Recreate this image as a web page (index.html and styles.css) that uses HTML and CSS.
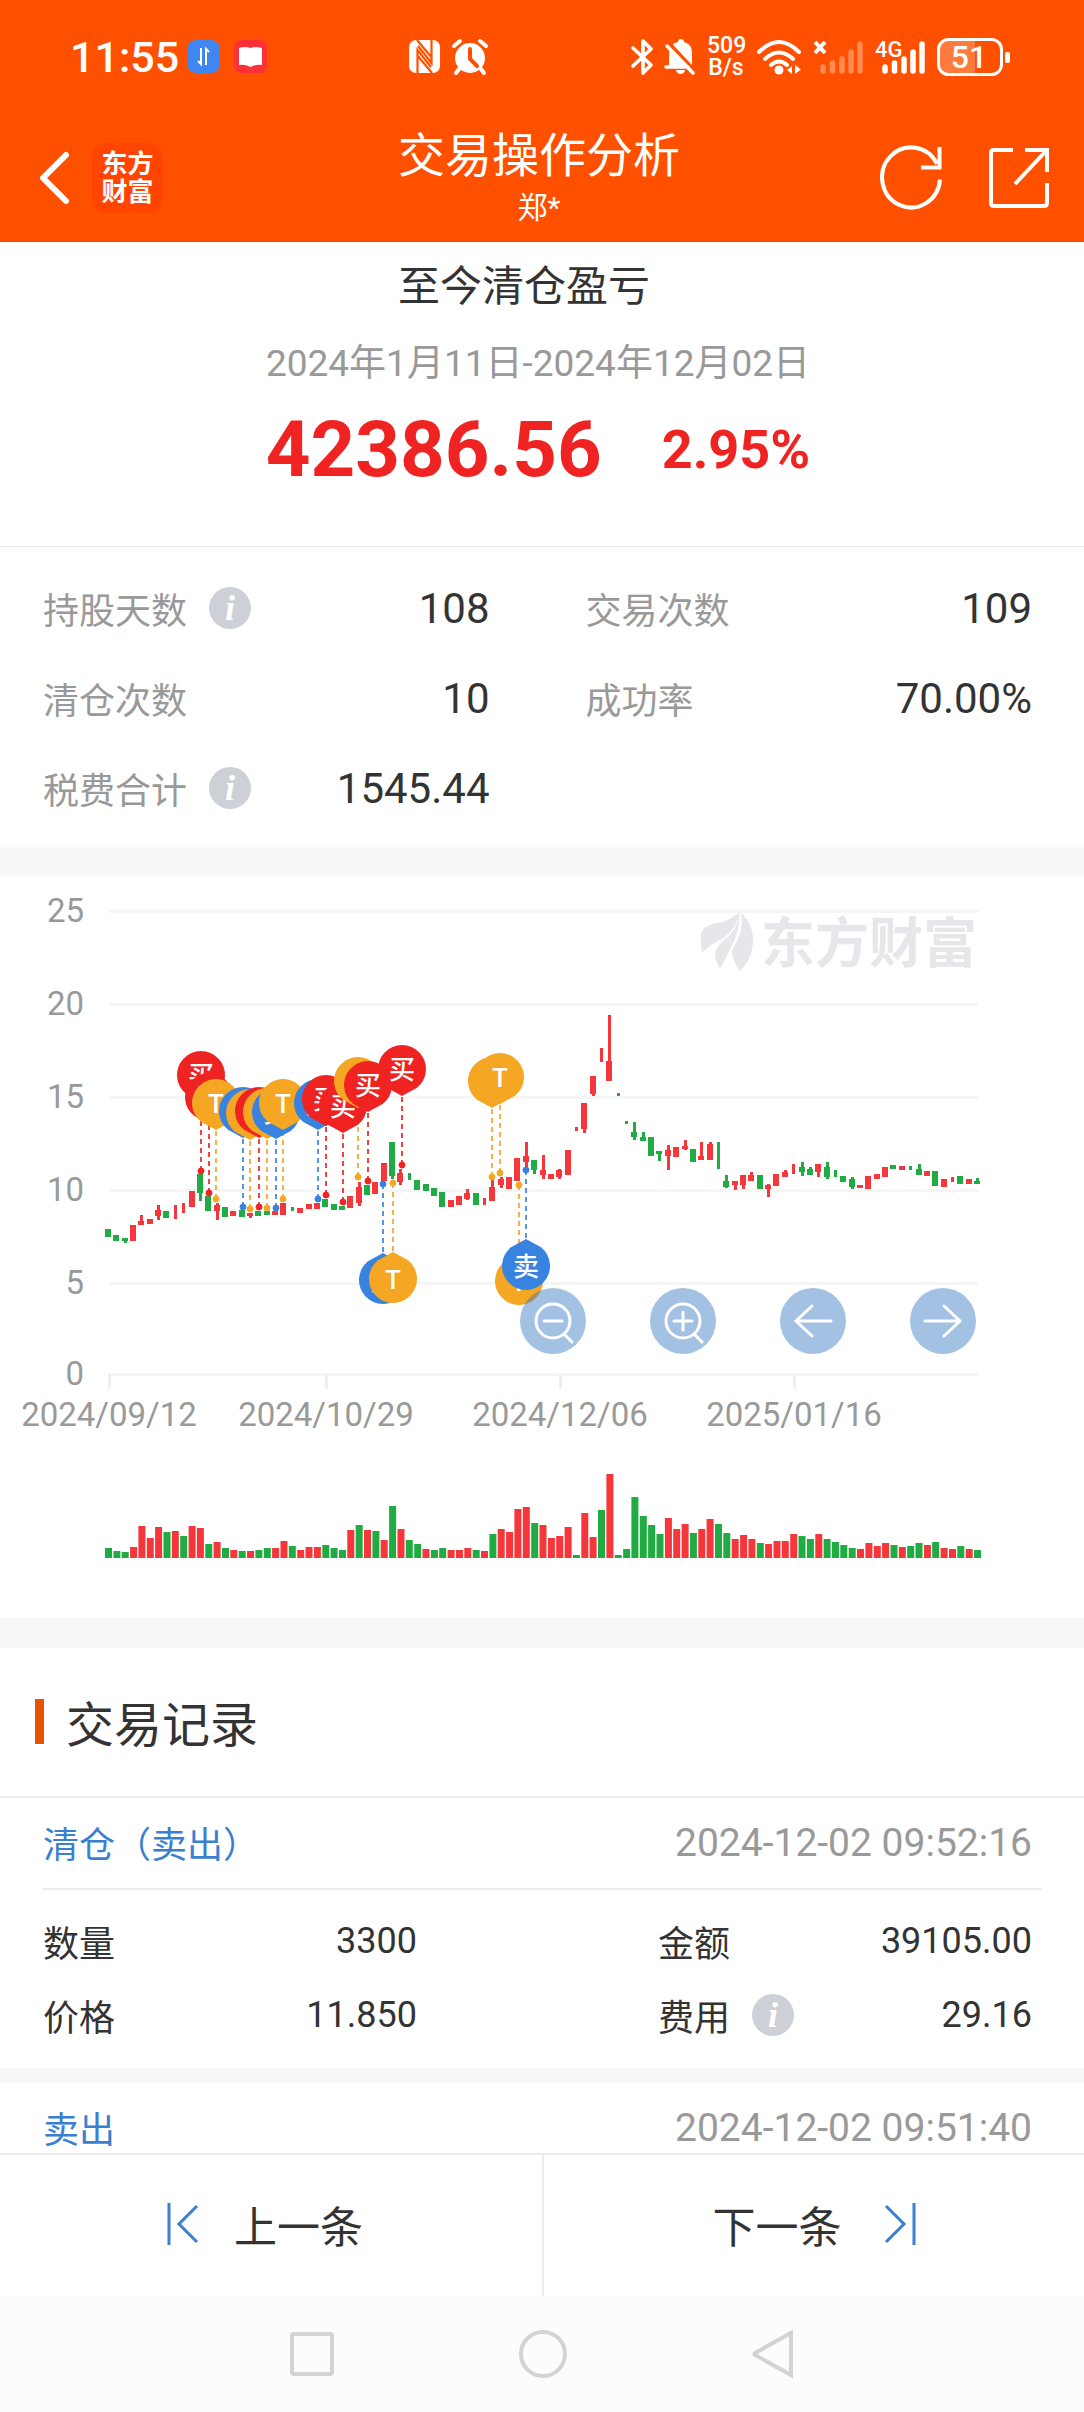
FILE: index.html
```html
<!DOCTYPE html>
<html lang="zh-CN">
<head>
<meta charset="utf-8">
<meta name="viewport" content="width=device-width,initial-scale=1.0">
<title>交易操作分析</title>
<link rel="stylesheet" href="styles.css">
</head>
<body>
<header class="top">
  <div class="status">
    <span class="time">11:55</span>
    <svg class="app-blue" width="33" height="33" viewBox="0 0 33 33"><rect width="33" height="33" rx="9" fill="#3f86f0"/><path d="M14 8v16l-3-3M19 25V9l3 3" fill="none" stroke="#fff" stroke-width="2"/></svg>
    <svg width="33" height="33" viewBox="0 0 33 33"><rect width="33" height="33" rx="8" fill="#fb3038"/><path d="M5 8q6-2 11.500 0 5.500-2 11.500 0v17q-6-1-11.500 2-5.500-3-11.500-2z" fill="#fff"/></svg>
    <svg class="nfc" width="31" height="33" viewBox="0 0 31 33"><rect width="31" height="33" rx="7" fill="#fff"/><path d="M8.500 33V10L22 27M22.500 0v23L9 6M8 0l15 18M8 15l15 18" fill="none" stroke="#ff5000" stroke-width="2.200"/></svg>
    <svg width="36" height="34" viewBox="0 0 36 34"><circle cx="18" cy="18" r="15" fill="#fff"/><path d="M2 6l6-5M34 6l-6-5M7 29l-3 4M29 29l3 4" stroke="#fff" stroke-width="4" stroke-linecap="round"/><path d="M18 9v10l7 7" fill="none" stroke="#ff5000" stroke-width="4" stroke-linecap="round"/></svg>
    <div class="status-right">
      <svg width="22" height="36" viewBox="0 0 22 36"><path d="M2 9l18 17-8 8V2l8 8L2 27" fill="none" stroke="#fff" stroke-width="3.600" stroke-linejoin="round" stroke-linecap="round"/></svg>
      <svg width="30" height="36" viewBox="0 0 30 36"><path d="M4 28V16q0-12 9-13 0-3 3-3t3 3q8 2 8 11v14zM11 31h9q-1 4-4.500 4T11 31z" fill="#fff"/><path d="M2 3l28 30" stroke="#ff5000" stroke-width="5"/><path d="M2 7l26 27M1 28h22" stroke="#fff" stroke-width="3.500" stroke-linecap="round"/></svg>
      <span class="net">509<br>B/s</span>
      <svg width="44" height="36" viewBox="0 0 44 36"><path d="M2 13q20-20 40 0M8 20q14-13 28 0M14 26q8-7 16 0" fill="none" stroke="#fff" stroke-width="4" stroke-linecap="round"/><circle cx="22" cy="31" r="4.500" fill="#fff"/><path d="M35 27v8l-5-4zM38 26v9l6-4.500z" fill="#fff"/></svg>
      <svg width="50" height="36" viewBox="0 0 50 36"><path d="M2 3l10 11M12 3L2 14" stroke="#fff" stroke-width="4"/><path d="M10 28v4M19.500 24v8M29 20v12M38 13v19M47 5v27" stroke="#ff8a52" stroke-width="5.500" stroke-linecap="round"/></svg>
      <svg width="50" height="36" viewBox="0 0 50 36"><text class="net-type" x="0" y="18">4G</text><path d="M10 28v4M19.500 24v8M29 20v12M38 13v19M47 5v27" stroke="#fff" stroke-width="5.500" stroke-linecap="round"/></svg>
      <svg width="73" height="38" viewBox="0 0 73 38"><path d="M12 2h26v34H12Q3 36 3 27V11q0-9 9-9z" fill="#ff7a3d"/><rect x="1.500" y="1.500" width="63" height="35" rx="10" fill="none" stroke="#fff" stroke-width="3"/><rect x="68" y="14" width="5" height="11" rx="2" fill="#fff"/><text class="battery" x="32" y="30" text-anchor="middle">51</text></svg>
    </div>
  </div>
  <div class="appbar">
    <div class="appbar-left">
      <button class="icon-btn" type="button" aria-label="返回"><svg width="40" height="56" viewBox="0 0 40 56"><path d="M38 5L15 28l23 23" fill="none" stroke="#fff" stroke-width="6" stroke-linecap="round" stroke-linejoin="round"/></svg></button>
      <div class="brand">东方<br>财富</div>
    </div>
    <div class="heading">
      <h1>交易操作分析</h1>
      <p>郑*</p>
    </div>
    <div class="appbar-right">
      <button class="icon-btn" type="button" aria-label="刷新"><svg width="62" height="64" viewBox="0 0 62 64"><path d="M59 33.500A29 30 0 1 1 56 18" fill="none" stroke="#fff" stroke-width="4"/><path d="M58.500 1v20.500H40" fill="none" stroke="#fff" stroke-width="4"/></svg></button>
      <button class="icon-btn" type="button" aria-label="分享"><svg width="62" height="62" viewBox="0 0 62 62"><path d="M25 3H6Q3 3 3 6v50q0 3 3 3h50q3 0 3-3V36M37 3h22v22M58 4L27 37" fill="none" stroke="#fff" stroke-width="4"/></svg></button>
    </div>
  </div>
</header>

<main>
  <section class="hero">
    <h2>至今清仓盈亏</h2>
    <p class="period">2024年1月11日-2024年12月02日</p>
    <p class="profit"><span class="amount">42386.56</span><span class="rate">2.95%</span></p>
  </section>

  <dl class="stats">
    <div><dt>持股天数<button class="info" type="button">i</button></dt><dd>108</dd></div>
    <div><dt>交易次数</dt><dd>109</dd></div>
    <div><dt>清仓次数</dt><dd>10</dd></div>
    <div><dt>成功率</dt><dd>70.00%</dd></div>
    <div><dt>税费合计<button class="info" type="button">i</button></dt><dd>1545.44</dd></div>
  </dl>

  <section class="chart">
    <svg id="kline" viewBox="0 0 1084 741">
      <g id="grid"></g>
      <g fill="#e6e6eb">
        <path d="M701 57q2-10 22-12 10-4 17-10-4 18-18 27-13 6-20 14-2-10-1-19z"/>
        <path d="M740 37q-1 17-6 27-4 9-14 28-5-9-5-15 1-7 8-13 14-10 17-27z"/>
        <path d="M741 36q13 12 12 30-1 16-13 28-8-12-8-17 0-6 5-13 7-14 4-28z"/>
        <text class="mark" x="761" y="86">东方财富</text>
      </g>
      <g id="candles"></g>
      <g id="pins"></g>
      <g id="volumes"></g>
    </svg>
    <div class="tools">
      <button type="button" aria-label="缩小"><svg width="66" height="66" viewBox="0 0 66 66"><circle cx="33" cy="33" r="17"/><path d="M24 33h18M44 46l8 8"/></svg></button>
      <button type="button" aria-label="放大"><svg width="66" height="66" viewBox="0 0 66 66"><circle cx="33" cy="33" r="17"/><path d="M24 33h18M33 24v18M44 46l8 8"/></svg></button>
      <button type="button" aria-label="左移"><svg width="66" height="66" viewBox="0 0 66 66"><path d="M51 33H16M32 18L16 33l16 15"/></svg></button>
      <button type="button" aria-label="右移"><svg width="66" height="66" viewBox="0 0 66 66"><path d="M15 33h35M34 18l16 15-16 15"/></svg></button>
    </div>
  </section>

  <section>
    <h2 class="section-title">交易记录</h2>
    <article class="record">
      <div class="record-head"><span class="type">清仓（卖出）</span><time>2024-12-02 09:52:16</time></div>
      <dl>
        <div><dt>数量</dt><dd>3300</dd></div>
        <div><dt>金额</dt><dd>39105.00</dd></div>
        <div><dt>价格</dt><dd>11.850</dd></div>
        <div><dt>费用<button class="info" type="button">i</button></dt><dd>29.16</dd></div>
      </dl>
    </article>
    <article class="record">
      <div class="record-head"><span class="type">卖出</span><time>2024-12-02 09:51:40</time></div>
    </article>
  </section>
</main>

<footer>
  <div class="pager">
    <button class="prev" type="button"><svg width="32" height="42" viewBox="0 0 32 42"><path d="M2 0v42M30 3L12 21l18 18"/></svg>上一条</button>
    <button class="next" type="button">下一条<svg width="32" height="42" viewBox="0 0 32 42"><path d="M30 0v42M2 3l18 18L2 39"/></svg></button>
  </div>
  <nav class="sysnav">
    <svg width="44" height="44" viewBox="0 0 44 44"><rect x="2" y="2" width="40" height="40" rx="2"/></svg>
    <svg width="48" height="48" viewBox="0 0 48 48"><circle cx="24" cy="24" r="22"/></svg>
    <svg width="42" height="48" viewBox="0 0 42 48"><path d="M39 3v42L3 25q-1-1 0-2z"/></svg>
  </nav>
</footer>
<script src="chart.js"></script>
</body>
</html>
```

FILE: styles.css
```css
* { box-sizing: border-box; margin: 0; padding: 0; }
html, body { height: 100%; }
body { display: flex; flex-direction: column; background: #fff; color: #333; font-family: Roboto, "Noto Sans CJK SC", sans-serif; font-size: 36px; line-height: 1.2; }
button { border: none; background: none; font: inherit; color: inherit; }
svg { display: block; flex: none; overflow: visible; }
h1, h2 { font-weight: 400; }

/* header */
.top { background: #ff5000; color: #fff; height: 242px; flex: none; }
.status { display: flex; align-items: center; height: 113px; padding: 0 74px 0 70px; }
.time { font-size: 43px; line-height: 60px; font-weight: 500; }
.app-blue { margin: 0 14px 0 8px; }
.nfc { margin: 0 12px 0 142px; }
.status-right { display: flex; align-items: center; gap: 12px; margin-left: auto; }
.net { width: 38px; font-size: 23px; line-height: 22px; font-weight: 500; text-align: center; }
.net-type { font-size: 22px; font-weight: 500; fill: #fff; }
.battery { font-size: 32px; font-weight: 500; fill: #fff; }
.appbar { display: grid; grid-template-columns: 1fr auto 1fr; align-items: center; height: 129px; padding: 0 34px 0 28px; }
.appbar-left, .appbar-right { display: flex; align-items: center; }
.appbar-right { justify-content: flex-end; gap: 45px; }
.brand { width: 71px; margin-left: 24px; padding: 7px 0; border-radius: 14px; background: #ff4500; font-size: 26px; line-height: 28px; font-weight: 700; text-align: center; }
.heading { padding-top: 4px; text-align: center; }
.heading h1 { font-size: 47px; line-height: 56px; }
.heading p { font-size: 30px; line-height: 48px; }

/* page */
main { flex: 1; min-height: 0; overflow-y: auto; scrollbar-width: none; }
.hero { padding: 15px 8px 51px 0; border-bottom: 1px solid #ececec; text-align: center; }
.hero h2 { padding-right: 28px; font-size: 42px; line-height: 60px; }
.period { margin: 17px 0 11px; font-size: 37px; line-height: 60px; color: #999; }
.profit { display: flex; align-items: center; justify-content: center; gap: 60px; line-height: 90px; font-weight: 700; color: #f02323; }
.amount { font-size: 78px; }
.rate { font-size: 54px; }

.stats { display: grid; grid-template-columns: 1fr 1fr; column-gap: 96px; padding: 17px 52px 13px 43px; }
.stats div, .record dl div { display: flex; align-items: center; justify-content: space-between; }
.stats div { height: 90px; }
.stats dt { color: #999; }
dt { display: flex; align-items: center; gap: 22px; }
dt, .type, .section-title, .pager { line-height: normal; }
dt, .type { padding-bottom: 3px; }
.stats dd { font-size: 42px; }
.info { width: 42px; height: 42px; border-radius: 50%; background: #cdd0d6; color: #fff; font: italic bold 36px/40px "Liberation Serif", serif; text-align: center; }

.chart { position: relative; border: solid #f8f8f8; border-width: 30px 0; }
.chart > svg { width: 100%; }
.axis { font-size: 33px; fill: #999; }
.mark { font-size: 54px; font-weight: 700; }
.pin-text { font-size: 26px; font-weight: 500; fill: #fff; text-anchor: middle; }
.up { fill: #f5363b; }
.down { fill: #20ac43; }
.buy { fill: #f02323; stroke: #f02323; }
.sell { fill: #3983e0; stroke: #3983e0; }
.both { fill: #f5a623; stroke: #f5a623; }
.pin { stroke: none; }
.tools { position: absolute; left: 48%; right: 10%; top: 411px; display: flex; justify-content: space-between; }
.tools button { border-radius: 50%; background: rgba(52, 118, 190, .45); }
.tools svg { fill: none; stroke: #fff; stroke-width: 3; stroke-linecap: round; }

.section-title { display: flex; align-items: center; gap: 22px; height: 150px; padding: 0 0 2px 35px; border-bottom: 2px solid #ececec; font-size: 48px; }
.section-title::before { content: ""; width: 9px; height: 45px; background: #e65400; }
.record { padding: 0 43px; border-bottom: 15px solid #f8f8f8; }
.record-head { display: flex; align-items: center; justify-content: space-between; height: 90px; padding-right: 9px; }
.type { color: #3a7fd0; }
.record time { font-size: 39px; color: #999; }
.record dl { display: grid; grid-template-columns: 1fr 1fr; column-gap: 241px; padding: 15px 9px 15px 0; border-top: 2px solid #ececec; }
.record dl div { height: 74px; }
.record dd { font-size: 36px; }

/* footer */
footer { flex: none; }
.pager { display: flex; border-top: 2px solid #ececec; background: #fff; }
.pager button { width: 50%; display: flex; align-items: center; justify-content: center; gap: 35px; height: 141px; padding-bottom: 3px; font-size: 43px; }
.pager svg { fill: none; stroke: #3a7fd0; stroke-width: 3; }
.pager .prev { padding-right: 12px; }
.pager .next { gap: 42px; border-left: 2px solid #ececec; }
.sysnav { display: flex; align-items: center; justify-content: center; gap: 185px; height: 116px; background: #fcfcfc; }
.sysnav svg { fill: none; stroke: #d3d3d3; stroke-width: 4; }
```

FILE: chart.js
```js
var STEP = 8.356;
var LEFT = 105;

// colour, body top, body bottom, wick top, wick bottom (body 0 = wick only)
var candles = [
  ["g",352,360],["g",358,364],["g",361,364,361,366],["r",348,364],["r",344,348,338,348],
  ["r",342,347],["r",333,339,328,343],["g",334,341],["r",0,0,328,342],["r",0,0,326,336],
  ["r",314,330],["g",297,316,297,324],["g",319,334],["r",328,334,326,343],["g",330,340],
  ["r",334,339],["g",333,340],["r",336,339,336,341],["g",334,339],["g",334,338],
  ["r",334,338],["r",326,338],["g",0,0,330,334],["r",331,336],["r",327,332],
  ["r",326,332],["g",322,330],["g",327,333],["g",329,333],["r",319,331],
  ["r",310,326,305,329],["g",308,318],["r",305,317],["r",286,304],["g",265,299,265,302],
  ["r",296,305,292,308],["g",0,0,296,303],["g",303,313],["g",307,314],["g",311,319],
  ["g",315,330],["r",323,330],["r",319,328],["r",316,322,312,323],["g",316,328],
  ["r",0,0,321,328],["r",310,324,303,324],["r",302,308,300,311],["r",300,312],["r",281,304],
  ["r",279,285,265,290],["g",283,293,283,297],["r",293,298,278,302],["r",297,302],["r",293,300,292,302],
  ["r",273,298],["r",0,0,250,254],["r",226,252,226,256],["r",199,217,199,219],["r",0,0,171,185],
  ["r",184,204,138,204],["g",0,0,216,219],["g",0,0,244,247],["g",255,260,245,263],["g",260,264,255,264],
  ["g",260,279],["g",274,277,274,284],["r",273,279,268,293],["r",270,280],["r",269,272,263,273],
  ["g",272,285],["r",279,283,265,283],["r",267,283,265,283],["g",0,0,265,292],["g",304,310,298,311],
  ["r",304,308,304,313],["r",298,308,298,312],["r",298,304,295,304],["g",298,312],["r",308,312,307,320],
  ["r",297,309],["r",295,300,293,300],["r",0,0,287,297],["g",290,295,285,299],["g",292,298,290,298],
  ["r",287,295,287,300],["g",290,300,285,302],["g",0,0,293,300],["g",299,305],["g",302,310,300,312],
  ["r",308,311],["r",299,312],["r",297,302],["r",290,300],["g",288,292],
  ["r",289,293],["g",0,0,289,293],["g",292,298,287,298],["r",294,299],["g",294,309],
  ["r",302,310],["r",0,0,300,305],["g",299,307],["r",302,307],["g",304,307,301,307]
];

// negative = falling day
var volumes = [-10,-7,-6,11,32,20,31,-26,27,-22,32,30,-14,16,-10,8,-7,7,-8,-10,10,17,-12,8,11,11,-13,-10,-8,28,-33,28,-27,18,-52,
  29,-18,-14,9,-8,-10,8,8,10,-8,7,-24,29,26,49,51,-35,33,20,22,31,-3,45,21,-48,84,-3,-9,-61,-42,-33,-24,40,29,34,
  -25,29,39,-34,-25,19,23,19,-15,14,17,17,24,-22,-19,24,-19,-16,-13,-10,9,15,12,15,-13,11,-12,-15,13,-16,10,9,-12,9,-8];

// type, x, y of the dot, direction (-1 above, 1 below)
var pins = [
  ["buy",201,294,-1],["buy",209,316,-1],["both",216,322,-1],["sell",243,330,-1],["both",250,332,-1],
  ["buy",259,330,-1],["both",267,331,-1],["sell",276,331,-1],["both",283,322,-1],["sell",318,322,-1],
  ["buy",326,318,-1],["buy",343,325,-1],["both",358,300,-1],["buy",368,304,-1],["buy",402,288,-1],
  ["both",492,300,-1],["both",500,296,-1],
  ["sell",383,307,1],["both",393,306,1],["both",519,308,1],["sell",526,293,1]
];
var names = { buy: "买", sell: "卖", both: "T" };

function rect(cls, x, y, w, h) {
  return '<rect class="' + cls + '" x="' + x + '" y="' + y + '" width="' + w + '" height="' + h + '"/>';
}
function put(id, html) {
  document.getElementById(id).innerHTML = html;
}

function drawGrid() {
  var out = "";
  var ys = [34, 127, 220, 313, 406, 497];
  for (var i = 0; i < ys.length; i++) {
    out += '<rect fill="#f5f5f5" x="109" y="' + (ys[i] - 1) + '" width="869" height="3"/>';
    out += '<text class="axis" text-anchor="end" x="84" y="' + (ys[i] + 11) + '">' + (25 - i * 5) + '</text>';
  }
  var days = [[109, "2024/09/12"], [326, "2024/10/29"], [560, "2024/12/06"], [794, "2025/01/16"]];
  for (i = 0; i < days.length; i++) {
    out += '<rect fill="#eee" x="' + (days[i][0] - 1) + '" y="497" width="3" height="15"/>';
    out += '<text class="axis" text-anchor="middle" x="' + days[i][0] + '" y="549">' + days[i][1] + '</text>';
  }
  put("grid", out);
}

function drawCandles() {
  var out = "";
  for (var i = 0; i < candles.length; i++) {
    var c = candles[i];
    var cls = c[0] == "r" ? "up" : "down";
    var x = Math.round(LEFT + i * STEP);
    if (c[1]) out += rect(cls, x, c[1], 6, c[2] - c[1]);
    if (c[3]) out += rect(cls, x + 2, c[3], 3, c[4] - c[3]);
  }
  put("candles", out);
}

function drawVolumes() {
  var out = "";
  for (var i = 0; i < volumes.length; i++) {
    var h = Math.abs(volumes[i]);
    out += rect(volumes[i] > 0 ? "up" : "down", (LEFT + i * STEP).toFixed(1), 681 - h, 7, h);
  }
  put("volumes", out);
}

function drawPins() {
  var lines = "", heads = "";
  for (var i = 0; i < pins.length; i++) {
    var p = pins[i], x = p[1], y = p[2], d = p[3];
    var cy = y + d * 96;
    lines += '<g class="' + p[0] + '"><path stroke-width="2" stroke-dasharray="5 4" opacity=".85" d="M' + x + ' ' + y + 'V' + cy + '"/><circle cx="' + x + '" cy="' + y + '" r="3"/></g>';
    heads += '<path class="pin ' + p[0] + '" transform="translate(' + x + ' ' + cy + ') scale(1 ' + (-d) + ')" d="M0 27L-15 18.700A24 24 0 1 1 15 18.700Z"/>';
    heads += '<text class="pin-text" x="' + x + '" y="' + (cy + 10) + '">' + names[p[0]] + '</text>';
  }
  put("pins", lines + heads);
}

drawGrid();
drawCandles();
drawPins();
drawVolumes();
```
